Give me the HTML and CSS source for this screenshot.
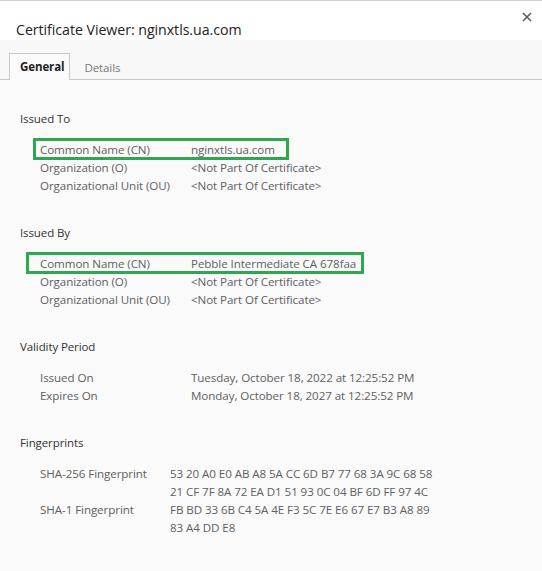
FILE: index.html
```html
<!DOCTYPE html>
<html>
<head>
<meta charset="utf-8">
<link rel="stylesheet" href="styles.css">
</head>
<body>
<div class="dialog">
  <header class="head">
    <h1 class="title">Certificate Viewer: nginxtls.ua.com</h1>
    <span class="close">
      <svg width="10" height="10" viewBox="0 0 10 10"><path d="M1 1L9 9M9 1L1 9" stroke="#5a5a5a" stroke-width="1.6" fill="none"/></svg>
    </span>
  </header>
  <nav class="tabs">
    <span class="tab active">General</span>
    <span class="tab">Details</span>
  </nav>
  <main class="content">
    <section class="section">
      <h2 class="sec-title">Issued To</h2>
      <div class="rows">
        <div class="row hl hl-a"><span class="k">Common Name (CN)</span><span class="v">nginxtls.ua.com</span></div>
        <div class="row"><span class="k">Organization (O)</span><span class="v">&lt;Not Part Of Certificate&gt;</span></div>
        <div class="row"><span class="k">Organizational Unit (OU)</span><span class="v">&lt;Not Part Of Certificate&gt;</span></div>
      </div>
    </section>
    <section class="section">
      <h2 class="sec-title">Issued By</h2>
      <div class="rows">
        <div class="row hl hl-b"><span class="k">Common Name (CN)</span><span class="v">Pebble Intermediate CA 678faa</span></div>
        <div class="row"><span class="k">Organization (O)</span><span class="v">&lt;Not Part Of Certificate&gt;</span></div>
        <div class="row"><span class="k">Organizational Unit (OU)</span><span class="v">&lt;Not Part Of Certificate&gt;</span></div>
      </div>
    </section>
    <section class="section">
      <h2 class="sec-title">Validity Period</h2>
      <div class="rows">
        <div class="row"><span class="k">Issued On</span><span class="v">Tuesday, October 18, 2022 at 12:25:52 PM</span></div>
        <div class="row"><span class="k">Expires On</span><span class="v">Monday, October 18, 2027 at 12:25:52 PM</span></div>
      </div>
    </section>
    <section class="section">
      <h2 class="sec-title">Fingerprints</h2>
      <div class="rows fp">
        <div class="row"><span class="k">SHA-256 Fingerprint</span><span class="v">53 20 A0 E0 AB A8 5A CC 6D B7 77 68 3A 9C 68 58<br>21 CF 7F 8A 72 EA D1 51 93 0C 04 BF 6D FF 97 4C</span></div>
        <div class="row"><span class="k">SHA-1 Fingerprint</span><span class="v">FB BD 33 6B C4 5A 4E F3 5C 7E E6 67 E7 B3 A8 89<br>83 A4 DD E8</span></div>
      </div>
    </section>
  </main>
</div>
</body>
</html>
```
FILE: styles.css
```css
html, body {
  margin: 0;
  padding: 0;
}
body {
  font-family: "Open Sans", "Noto Sans", sans-serif;
  background: #fafafa;
  width: 542px;
  height: 571px;
  overflow: hidden;
}
.dialog {
  border-top: 1px solid #cfcfcf;
  height: 570px;
  background: #fafafa;
}
.head {
  background: #ffffff;
  height: 39px;
  display: flex;
  justify-content: space-between;
  align-items: flex-start;
}
.title {
  margin: 19px 0 0 16px;
  font-size: 14.2px;
  font-weight: 400;
  color: #222;
  line-height: 20px;
  letter-spacing: -0.05px;
}
.close {
  margin: 11px 10px 0 0;
  width: 10px;
  height: 10px;
  display: flex;
}
.tabs {
  background: #f8f8f8;
  height: 39px;
  border-bottom: 1px solid #c9c9c9;
  display: flex;
  align-items: flex-end;
  padding-left: 9px;
}
.tab {
  font-size: 11.5px;
  letter-spacing: -0.1px;
  color: #777;
  height: 25px;
  line-height: 25px;
  padding: 0 11px 0 13px;
  margin-bottom: -1px;
  border: 1px solid transparent;
  border-bottom: none;
}
.tab.active {
  font-weight: 700;
  color: #222;
  background: #fafafa;
  border-color: #c9c9c9;
  padding: 0 5px 0 10px;
  height: 26px;
  border-bottom: none;
}
.content {
  padding: 30px 0 0 20px;
}
.section {
  margin-bottom: 29px;
}
.sec-title {
  margin: 0;
  font-size: 11.5px;
  letter-spacing: -0.1px;
  font-weight: 400;
  color: #333;
  line-height: 18px;
}
.rows {
  margin-top: 13px;
  padding-left: 20px;
}
.row {
  display: flex;
  font-size: 11.6px;
  letter-spacing: -0.08px;
  line-height: 18px;
  color: #606060;
  position: relative;
}
.k {
  width: 151px;
  flex: none;
}
.fp .k {
  width: 130px;
}
.hl::before {
  content: "";
  position: absolute;
  top: -3px;
  height: 16px;
  border: 3px solid #2ea84f;
}
.hl-a::before {
  left: -7px;
  width: 250px;
}
.hl-b::before {
  left: -14px;
  width: 332px;
}
```
